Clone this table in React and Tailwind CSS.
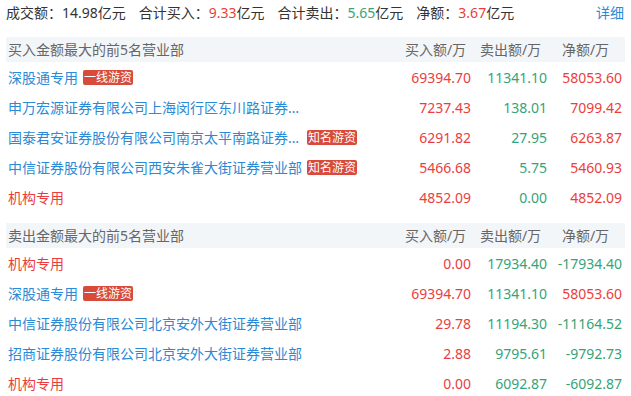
import React from "react";

const BLUE = "text-[#2a8ad5]";
const RED = "text-[#ea3e3e]";
const GREEN = "text-[#35a478]";

const buyRows = [
  { name: "深股通专用", tag: "一线游资", buy: "69394.70", sell: "11341.10", net: "58053.60" },
  { name: "申万宏源证券有限公司上海闵行区东川路证券营业部", buy: "7237.43", sell: "138.01", net: "7099.42" },
  { name: "国泰君安证券股份有限公司南京太平南路证券营业部", tag: "知名游资", buy: "6291.82", sell: "27.95", net: "6263.87" },
  { name: "中信证券股份有限公司西安朱雀大街证券营业部", tag: "知名游资", buy: "5466.68", sell: "5.75", net: "5460.93" },
  { name: "机构专用", inst: true, buy: "4852.09", sell: "0.00", net: "4852.09" },
];

const sellRows = [
  { name: "机构专用", inst: true, buy: "0.00", sell: "17934.40", net: "-17934.40" },
  { name: "深股通专用", tag: "一线游资", buy: "69394.70", sell: "11341.10", net: "58053.60" },
  { name: "中信证券股份有限公司北京安外大街证券营业部", buy: "29.78", sell: "11194.30", net: "-11164.52" },
  { name: "招商证券股份有限公司北京安外大街证券营业部", buy: "2.88", sell: "9795.61", net: "-9792.73" },
  { name: "机构专用", inst: true, buy: "0.00", sell: "6092.87", net: "-6092.87" },
];

function Section({ title, rows }) {
  return (
    <div>
      <div className="flex h-[25px] items-center bg-[#f3f6f9] pr-[2px] text-[#666]">
        <div className="flex-1 pl-[2px]">{title}</div>
        <div className="w-[75px] text-center">买入额/万</div>
        <div className="w-[75px] text-center">卖出额/万</div>
        <div className="w-[75px] text-center">净额/万</div>
      </div>
      {rows.map((r, i) => (
        <div key={i} className="flex h-[30px] items-center pr-[2px]">
          <div className="flex min-w-0 flex-1 items-center pl-[2px]">
            <span className={`max-w-[294px] truncate ${r.inst ? RED : BLUE}`}>{r.name}</span>
            {r.tag && (
              <span className="ml-[5px] h-[15px] shrink-0 rounded-[2px] bg-[#d84a3a] px-[1px] text-[12px] leading-[15px] text-white">
                {r.tag}
              </span>
            )}
          </div>
          <div className={`w-[75px] pr-[2px] text-right ${RED}`}>{r.buy}</div>
          <div className={`w-[75px] pr-[1px] text-right ${GREEN}`}>{r.sell}</div>
          <div className={`w-[75px] pr-[1px] text-right ${r.net.startsWith("-") ? GREEN : RED}`}>{r.net}</div>
        </div>
      ))}
    </div>
  );
}

export default function App() {
  return (
    <div className="h-[396px] w-[631px] overflow-hidden bg-white px-[6px] text-[14px] text-[#333] font-['Noto_Sans','Noto_Sans_CJK_SC',sans-serif]">
      <div className="flex h-[25px] items-center">
        <div className="flex flex-1 gap-[13px]">
          <span>成交额：14.98亿元</span>
          <span>
            合计买入：<span className={RED}>9.33</span>亿元
          </span>
          <span>
            合计卖出：<span className={GREEN}>5.65</span>亿元
          </span>
          <span>
            净额：<span className={RED}>3.67</span>亿元
          </span>
        </div>
        <span className={`mr-[1px] ${BLUE}`}>详细</span>
      </div>
      <div className="mt-[12px]">
        <Section title="买入金额最大的前5名营业部" rows={buyRows} />
      </div>
      <div className="mt-[11px]">
        <Section title="卖出金额最大的前5名营业部" rows={sellRows} />
      </div>
    </div>
  );
}
